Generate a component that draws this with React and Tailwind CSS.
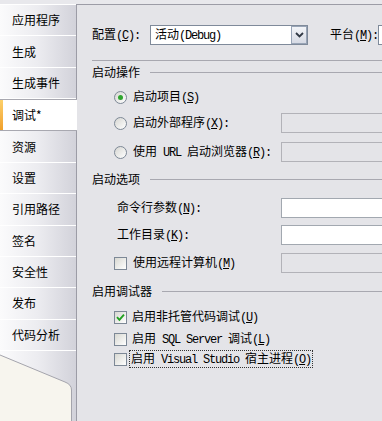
import React from "react";

function M({ children }) {
  return (
    <span className="font-['Liberation_Mono',monospace] text-[12px] tracking-[-1.2px] whitespace-pre">
      {children}
    </span>
  );
}

function K({ k, colon }) {
  return (
    <M>
      (<u>{k}</u>){colon ? ":" : ""}
    </M>
  );
}

function Radio({ checked }) {
  return (
    <span className="w-[13px] h-[13px] rounded-full border border-[#7d8896] bg-linear-to-br from-[#d6d6d2] to-white flex items-center justify-center shrink-0">
      {checked && <span className="w-[5px] h-[5px] rounded-full bg-[#2fa52f]" />}
    </span>
  );
}

function Check({ checked }) {
  return (
    <span className="w-[13px] h-[13px] border border-[#7d8896] bg-linear-to-br from-[#d8d8d2] to-white flex items-center justify-center shrink-0">
      {checked && (
        <svg width="9" height="9" viewBox="0 0 9 9">
          <path d="M1 4.2 L3.4 6.8 L8 1.6" stroke="#21a121" strokeWidth="1.9" fill="none" />
        </svg>
      )}
    </span>
  );
}

function Header({ children }) {
  return (
    <div className="h-[20px] flex items-center">
      <span className="shrink-0">{children}</span>
      <div className="flex-1 h-px bg-[#a8a8b0] ml-[10px]" />
    </div>
  );
}

function Box({ white }) {
  return (
    <div
      className={
        "w-[110px] h-[20px] shrink-0 border " +
        (white ? "bg-white border-[#a2a8b0]" : "bg-[#e4e4e8] border-[#b2b2b8]")
      }
    />
  );
}

const tabs = ["应用程序", "生成", "生成事件", "调试*", "资源", "设置", "引用路径", "签名", "安全性", "发布", "代码分析"];

export default function App() {
  return (
    <div className="w-[382px] h-[421px] bg-[#e8e8ec] flex overflow-hidden font-['Noto_Sans_CJK_SC',sans-serif] text-[12px] text-black leading-none">
      <aside className="w-[76px] shrink-0 mt-[4px] flex flex-col relative z-10 bg-linear-to-r from-[#fbfbfc] via-[#ececf0] to-[#d2d2da]">
        <div className="h-px bg-white" />
        {tabs.map((t) =>
          t === "调试*" ? (
            <div
              key={t}
              className="w-[77px] h-[33px] bg-white border-t border-b border-[#a8a8b0] flex items-center"
            >
              <div className="w-[3px] h-full bg-linear-to-b from-[#fcd06a] to-[#f0a028]" />
              <span className="pl-[9px]">{t}</span>
            </div>
          ) : (
            <div key={t} className="h-[32px] border-b border-white flex items-center pl-[12px]">
              {t}
            </div>
          )
        )}
        <svg width="76" height="70" className="block shrink-0">
          <path d="M0 4 L65 31 Q71.5 33.5 71.5 39 L71.5 70 L0 70 Z" fill="#f7f5ee" />
          <path d="M0 4 L65 31 Q71.5 33.5 71.5 39 L71.5 70" fill="none" stroke="#a4a4ac" strokeWidth="1" />
        </svg>
      </aside>

      <main className="flex-1 min-w-0 mt-[4px] border-t border-l border-[#9c9ca6] bg-[#e4e4e8] flex flex-col pl-[15px] overflow-hidden">
        <div className="mt-[20px] h-[20px] flex items-center">
          <span className="w-[58px] shrink-0">
            配置<K k="C" colon />
          </span>
          <div className="w-[158px] h-[20px] shrink-0 border border-[#7f8a9a] bg-white flex items-center">
            <span className="flex-1 pl-[4px]">
              活动<M>(Debug)</M>
            </span>
            <div className="w-[16px] h-[18px] border border-[#98a4b6] bg-linear-to-b from-[#f2f4f8] to-[#d6dae4] flex items-center justify-center">
              <svg width="9" height="6" viewBox="0 0 9 6">
                <path d="M1 1 L4.5 4.5 L8 1" stroke="#303844" strokeWidth="1.8" fill="none" />
              </svg>
            </div>
          </div>
          <span className="ml-[22px] shrink-0">
            平台<K k="M" colon />
          </span>
          <div className="w-[40px] h-[20px] shrink-0 border border-[#7f8a9a] bg-white" />
        </div>

        <div className="mt-[15px] h-px bg-[#a8a8b0]" />

        <div className="mt-[1px]">
          <Header>启动操作</Header>
        </div>

        <div className="mt-[5px] h-[20px] flex items-center pl-[22px]">
          <Radio checked />
          <span className="ml-[6px]">
            启动项目<K k="S" />
          </span>
        </div>

        <div className="mt-[6px] h-[20px] flex items-center">
          <div className="w-[189px] shrink-0 flex items-center pl-[22px]">
            <Radio />
            <span className="ml-[6px]">
              启动外部程序<K k="X" colon />
            </span>
          </div>
          <Box />
        </div>

        <div className="mt-[9px] h-[20px] flex items-center">
          <div className="w-[189px] shrink-0 flex items-center pl-[22px]">
            <Radio />
            <span className="ml-[6px]">
              使用<M> URL </M>启动浏览器<K k="R" colon />
            </span>
          </div>
          <Box />
        </div>

        <div className="mt-[7px]">
          <Header>启动选项</Header>
        </div>

        <div className="mt-[9px] h-[20px] flex items-center">
          <div className="w-[189px] shrink-0 pl-[25px]">
            命令行参数<K k="N" colon />
          </div>
          <Box white />
        </div>

        <div className="mt-[7px] h-[20px] flex items-center">
          <div className="w-[189px] shrink-0 pl-[25px]">
            工作目录<K k="K" colon />
          </div>
          <Box white />
        </div>

        <div className="mt-[8px] h-[20px] flex items-center">
          <div className="w-[189px] shrink-0 flex items-center pl-[22px]">
            <Check />
            <span className="ml-[6px]">
              使用远程计算机<K k="M" />
            </span>
          </div>
          <Box />
        </div>

        <div className="mt-[8px]">
          <Header>启用调试器</Header>
        </div>

        <div className="mt-[6px] h-[20px] flex items-center pl-[22px]">
          <Check checked />
          <span className="ml-[5px]">
            启用非托管代码调试<K k="U" />
          </span>
        </div>

        <div className="mt-[2px] h-[20px] flex items-center pl-[22px]">
          <Check />
          <span className="ml-[5px]">
            启用<M> SQL Server </M>调试<K k="L" />
          </span>
        </div>

        <div className="h-[20px] flex items-center pl-[22px]">
          <Check />
          <span className="ml-[3px] px-[1px] py-[1px] outline-1 outline-dotted outline-[#333]">
            启用<M> Visual Studio </M>宿主进程<K k="O" />
          </span>
        </div>
      </main>
    </div>
  );
}
